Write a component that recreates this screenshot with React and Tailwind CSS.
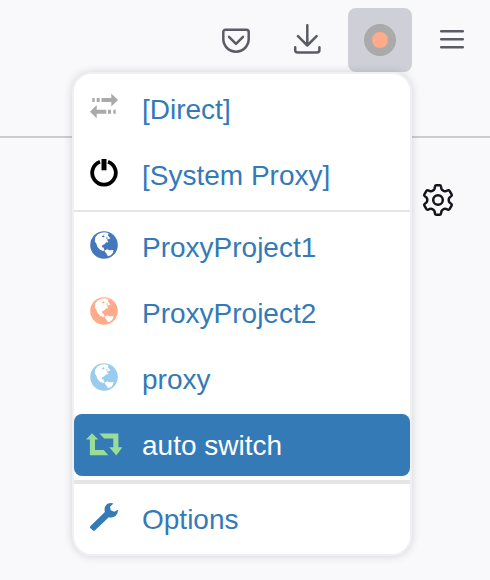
import React from "react";

const DirectIcon = () => (
  <svg viewBox="0 0 28 28" className="h-7 w-7 fill-[#aaaaaa]">
    <path d="M2.300 5h2.400v4H2.300zM6.700 5h3v4h-3zM11.500 5h9.800V.400L28 7l-6.700 6.600V9h-9.800z" />
    <path d="M25.700 16.700h-2.400v4h2.400zM21 16.700h-3v4h3zM16.300 16.700H6.700v-4.600L0 18.700l6.700 6.600v-4.600h9.600z" />
  </svg>
);

const PowerIcon = () => (
  <svg viewBox="0 0 28 28" className="h-7 w-7" fill="none" stroke="#000">
    <path d="M10 2.800a11.800 11.800 0 1 0 8 0" strokeWidth="3.800" />
    <path d="M14 0v11.300" strokeWidth="5" />
  </svg>
);

const GlobeIcon = ({ color }) => (
  <svg viewBox="0 0 28 28" className="h-7 w-7">
    <circle cx="14" cy="14" r="13.800" fill={color} />
    <path
      d="M7.500 3.500L11 1.800 14.500 1.300 18.500 2 18 4.500 20.500 7.500 17 8.500 18.300 11.500 16 11.300 14.800 13 12 14.500 11.800 16.300 13.500 16.500 14.500 19.200 13 20 10 18.800 7.500 16 6.300 12.500 4.800 10.500 5.200 6.500z"
      fill="#fff"
    />
    <path d="M14.300 19.700L17.300 18.200 19.500 19.200 23.500 19 23 21.800 20.800 24.300 18 25.300 16.500 22.800z" fill="#fff" />
    <path d="M11.800 5.300L13.500 4.300 14.800 5.500 13 6.500z" fill={color} />
    <path d="M16 6.800L17.500 6.300 17.800 7.500 16.500 7.800z" fill={color} />
  </svg>
);

const SwitchIcon = () => (
  <svg viewBox="0 0 36 24" className="h-6 w-9 translate-y-px fill-[#99dd99]">
    <path d="M6 1.300L-.2 7.600H3.900v15.600H22.300l-4.500-5.100H9V7.600h3.300z" />
    <path d="M30.300 23.500l6-8.200h-3.900V1.400H13.400l4.800 5.100h9.100v8.800h-4z" />
  </svg>
);

const WrenchIcon = () => (
  <svg viewBox="0 0 28 28" className="h-7 w-7 fill-[#337ab7]">
    <path d="M23.500.500Q18-1 15.300 3.300 14 6 14.900 9L.3 23.300q-.7.900 0 1.700l2.700 2.600q1 .8 1.800 0L18.800 14.200q4.500 1 7.200-1.700 2.200-2.300 1.900-5.800l-3.600 2.100-3.600-1.600L20 3.700z" />
  </svg>
);

const PocketIcon = () => (
  <svg viewBox="0 0 28 25" className="h-[25px] w-7" fill="none" stroke="#5b5b66" strokeWidth="2.500" strokeLinecap="round" strokeLinejoin="round">
    <path d="M3.700 1.700h20.600Q26.700 1.700 26.700 4.100V11.100a12.700 12.600 0 0 1-25.400 0V4.100Q1.300 1.700 3.700 1.700z" />
    <path d="M7 8.800l7 7 7-7" />
  </svg>
);

const DownloadIcon = () => (
  <svg viewBox="0 0 28 30" className="h-[30px] w-7" fill="none" stroke="#5b5b66" strokeWidth="2.500" strokeLinecap="round" strokeLinejoin="round">
    <path d="M14.300 1.200v20M5 12.200l9.300 9.300 9.300-9.300" />
    <path d="M2.200 23.300v2.700q0 2.500 2.500 2.500h19.200q2.500 0 2.500-2.500v-2.700" />
  </svg>
);

const MenuIcon = () => (
  <svg viewBox="0 0 24 20" className="h-5 w-6" fill="none" stroke="#5b5b66" strokeWidth="2.500" strokeLinecap="round">
    <path d="M1.200 2.200h21.600M1.200 10.200h21.600M1.200 18.200h21.600" />
  </svg>
);

const GearIcon = () => (
  <svg viewBox="0 0 32 32" className="h-8 w-8" fill="none" stroke="#15141a" strokeWidth="2.500" strokeLinejoin="round">
    <path d="M14.400 1.300H17.600Q18.800 1.300 19 2.500L19.400 4.600Q19.800 6 21.300 6.700Q22.600 7.600 24 7.100L25.800 6.400Q27 6 27.700 7.100L29.600 10.300Q30.200 11.300 29.300 12.100L27.700 13.400Q26.700 14.400 26.700 16Q26.700 17.600 27.700 18.600L29.300 19.900Q30.200 20.700 29.600 21.700L27.700 24.900Q27 26 25.800 25.600L24 24.900Q22.600 24.400 21.300 25.300Q19.800 26 19.400 27.400L19 29.500Q18.800 30.700 17.600 30.700H14.400Q13.200 30.700 13 29.500L12.600 27.400Q12.200 26 10.700 25.300Q9.400 24.400 8 24.900L6.200 25.600Q5 26 4.300 24.900L2.400 21.700Q1.800 20.700 2.700 19.900L4.300 18.600Q5.300 17.600 5.300 16Q5.300 14.400 4.300 13.400L2.700 12.100Q1.800 11.300 2.400 10.300L4.300 7.100Q5 6 6.200 6.400L8 7.100Q9.400 7.600 10.700 6.700Q12.200 6 12.600 4.600L13 2.500Q13.200 1.300 14.400 1.300Z" />
    <circle cx="16" cy="16" r="4.800" />
  </svg>
);

const PROFILES = [
  { name: "ProxyProject1", icon: <GlobeIcon color="#4477bb" /> },
  { name: "ProxyProject2", icon: <GlobeIcon color="#ffaa88" /> },
  { name: "proxy", icon: <GlobeIcon color="#99ccee" /> },
];

const MenuItem = ({ icon, label, active }) => (
  <button
    className={`flex h-[62px] w-full items-center rounded-lg text-left text-[28px] whitespace-nowrap ${
      active ? "bg-[#337ab7] text-white" : "text-[#337ab7]"
    }`}
  >
    <span className="flex w-[60px] shrink-0 justify-center pb-1">{icon}</span>
    <span className="pt-0.5 pl-2">{label}</span>
  </button>
);

const Toolbar = () => (
  <header className="flex h-[138px] items-start border-b-2 border-[#cccccf] pt-2">
    <div className="ml-[204px] flex h-16 w-16 items-center justify-center">
      <PocketIcon />
    </div>
    <div className="ml-[7px] flex h-16 w-16 items-center justify-center pb-0.5">
      <DownloadIcon />
    </div>
    <div className="ml-[9px] flex h-16 w-16 items-center justify-center rounded-lg bg-[#cfcfd8]">
      <div className="h-8 w-8 rounded-full border-8 border-[#aaaaaa] bg-[#ffaa88]" />
    </div>
    <div className="ml-7 flex h-16 w-6 items-center pb-0.5">
      <MenuIcon />
    </div>
  </header>
);

const ProfileMenu = () => (
  <nav className="absolute top-[72px] left-[72px] flex h-[484px] w-[340px] flex-col gap-1 rounded-[20px] border-2 border-[#f0f0f4] bg-white py-1 shadow-[0_0_8px_rgba(58,57,68,0.2)]">
    <MenuItem icon={<DirectIcon />} label="[Direct]" />
    <MenuItem icon={<PowerIcon />} label="[System Proxy]" />
    <div className="h-0.5 shrink-0 bg-[#e5e5e5]" />
    {PROFILES.map((p) => (
      <MenuItem key={p.name} icon={p.icon} label={p.name} />
    ))}
    <MenuItem icon={<SwitchIcon />} label="auto switch" active />
    <div className="h-1 shrink-0 bg-[#e5e5e5]" />
    <MenuItem icon={<WrenchIcon />} label="Options" />
  </nav>
);

const App = () => (
  <div className="relative h-[580px] w-[490px] overflow-hidden bg-[#f9f9fb] font-['Liberation_Sans',Arial,sans-serif]">
    <Toolbar />
    <main className="flex justify-end pt-[46px] pr-9">
      <GearIcon />
    </main>
    <ProfileMenu />
  </div>
);

export default App;
